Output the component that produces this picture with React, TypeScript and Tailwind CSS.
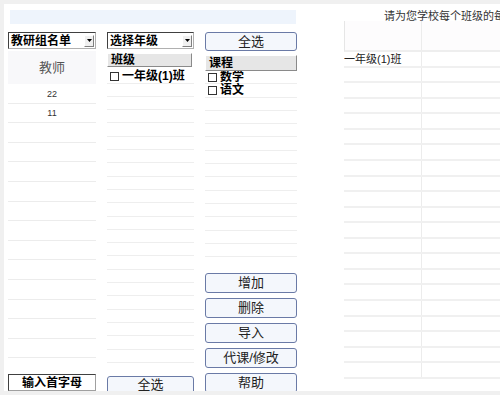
import React from 'react';

const Arrow = () => (
  <span className="w-[10px] h-[12px] mr-[1px] bg-[#f0f0f0] border border-t-white border-l-white border-r-[#808080] border-b-[#808080] flex items-center justify-center">
    <svg width="5" height="3" viewBox="0 0 5 3"><path d="M0 0h5L2.5 3z" fill="#000" /></svg>
  </span>
);

const Select = ({ label }: { label: string }) => (
  <div className="h-[17px] flex items-center bg-white border border-t-[#404040] border-l-[#404040] border-r-[#b0b0b0] border-b-[#b0b0b0] pl-[2px]">
    <span className="flex-1 text-[12px] leading-[14px] font-bold text-black">{label}</span>
    <Arrow />
  </div>
);

const Btn = ({ label, className = '' }: { label: string; className?: string }) => (
  <div className={`shrink-0 flex items-center justify-center rounded-[3px] border border-[#6a7aa6] bg-[#f4f7fc] text-[13px] text-[#222] ${className}`}>
    {label}
  </div>
);

const Head = ({ label, className = '' }: { label: string; className?: string }) => (
  <div className={`shrink-0 flex items-center pl-[3px] bg-[#e6e6e6] border border-t-white border-l-white border-r-[#8a8a8a] border-b-[#8a8a8a] text-[12px] font-bold text-black ${className}`}>
    {label}
  </div>
);

const Check = ({ label }: { label: string }) => (
  <div className="flex items-center gap-[3px] pl-[3px] text-[12px] leading-[13px] font-bold text-black whitespace-nowrap">
    <span className="w-[9px] h-[9px] border border-[#333] bg-white" />
    {label}
  </div>
);

export default function App() {
  const leftRows = ['22', '11', ...Array(16).fill('')];
  const midRows = Array(22).fill('');
  const courseRows = ['数学', '语文', ...Array(12).fill('')];
  const tableRows = ['一年级(1)班', ...Array(20).fill('')];

  return (
    <div className="w-[500px] h-[395px] bg-[#f0f0f0] pl-[4px] pt-[4px] pb-[4px] overflow-hidden font-['Liberation_Sans','Noto_Sans_CJK_SC',sans-serif]">
      <div className="flex h-full bg-white overflow-hidden">
        {/* left area */}
        <div className="w-[340px] shrink-0 flex flex-col pl-[4px] pt-[6px]">
          <div className="ml-[2px] w-[286px] h-[14px] bg-[#eef4fc]" />
          <div className="mt-[8px] flex gap-[11px] flex-1 min-h-0">
            {/* teachers */}
            <div className="w-[88px] flex flex-col">
              <Select label="教研组名单" />
              <div className="mt-[2px] h-[33px] shrink-0 bg-[#f8f8fa] flex items-center justify-center text-[13px] text-[#555]">
                教师
              </div>
              <div className="flex-1 min-h-0 overflow-hidden">
                {leftRows.map((r, i) => (
                  <div key={i} className="h-[19.6px] pt-[2px] border-b border-[#ececec] flex items-center justify-center text-[9px] text-[#333]">
                    {r}
                  </div>
                ))}
              </div>
              <div className="h-[17px] shrink-0 flex items-center justify-center bg-white border border-t-[#404040] border-l-[#404040] border-r-[#a0a0a0] border-b-[#a0a0a0] text-[12px] font-bold text-black">
                输入首字母
              </div>
            </div>

            {/* classes */}
            <div className="w-[87px] flex flex-col">
              <Select label="选择年级" />
              <Head label="班级" className="mt-[4px] h-[14px] mr-[2px]" />
              <div className="flex-1 min-h-0 overflow-hidden">
                <div className="h-[16.6px] pt-[3px] border-b border-[#eeeeee] flex items-center">
                  <Check label="一年级(1)班" />
                </div>
                {midRows.map((_, i) => (
                  <div key={i} className="h-[13.3px] border-b border-[#eeeeee]" />
                ))}
              </div>
              <Btn label="全选" className="h-[18px] mt-[10px] mb-[-3px]" />
            </div>

            {/* courses */}
            <div className="w-[92px] flex flex-col">
              <Btn label="全选" className="h-[19px]" />
              <Head label="课程" className="mt-[4px] h-[16px]" />
              <div className="h-[202px] shrink-0 overflow-hidden">
                {courseRows.map((c, i) => (
                  <div key={i} className="h-[13.3px] pt-[1px] border-b border-[#eeeeee] flex items-center">
                    {c && <Check label={c} />}
                  </div>
                ))}
              </div>
              <div className="flex flex-col gap-[5px]">
                <Btn label="增加" className="h-[20px]" />
                <Btn label="删除" className="h-[20px]" />
                <Btn label="导入" className="h-[20px]" />
                <Btn label="代课/修改" className="h-[20px]" />
                <Btn label="帮助" className="h-[20px]" />
              </div>
            </div>
          </div>
        </div>

        {/* right table */}
        <div className="flex-1 min-w-0 flex flex-col overflow-hidden">
          <div className="h-[17px] shrink-0 pt-[6px] pl-[40px] whitespace-nowrap overflow-hidden text-[11px] leading-[12px] text-[#333]">
            请为您学校每个班级的每门
          </div>
          <div className="h-[31px] shrink-0 flex border-l border-[#e6e6e6] border-b-2 border-b-[#eeeeee] bg-[#fdfcfd]">
            <div className="w-[77px] border-r border-[#ececec]" />
            <div className="flex-1" />
          </div>
          {tableRows.map((r, i) => (
            <div key={i} className="h-[15.57px] shrink-0 flex border-b-2 border-[#f0f0f0]">
              <div className="w-[78px] border-r border-[#ececec] flex items-center text-[11px] text-[#222] whitespace-nowrap">
                {r}
              </div>
              <div className="flex-1" />
            </div>
          ))}
        </div>
      </div>
    </div>
  );
}
